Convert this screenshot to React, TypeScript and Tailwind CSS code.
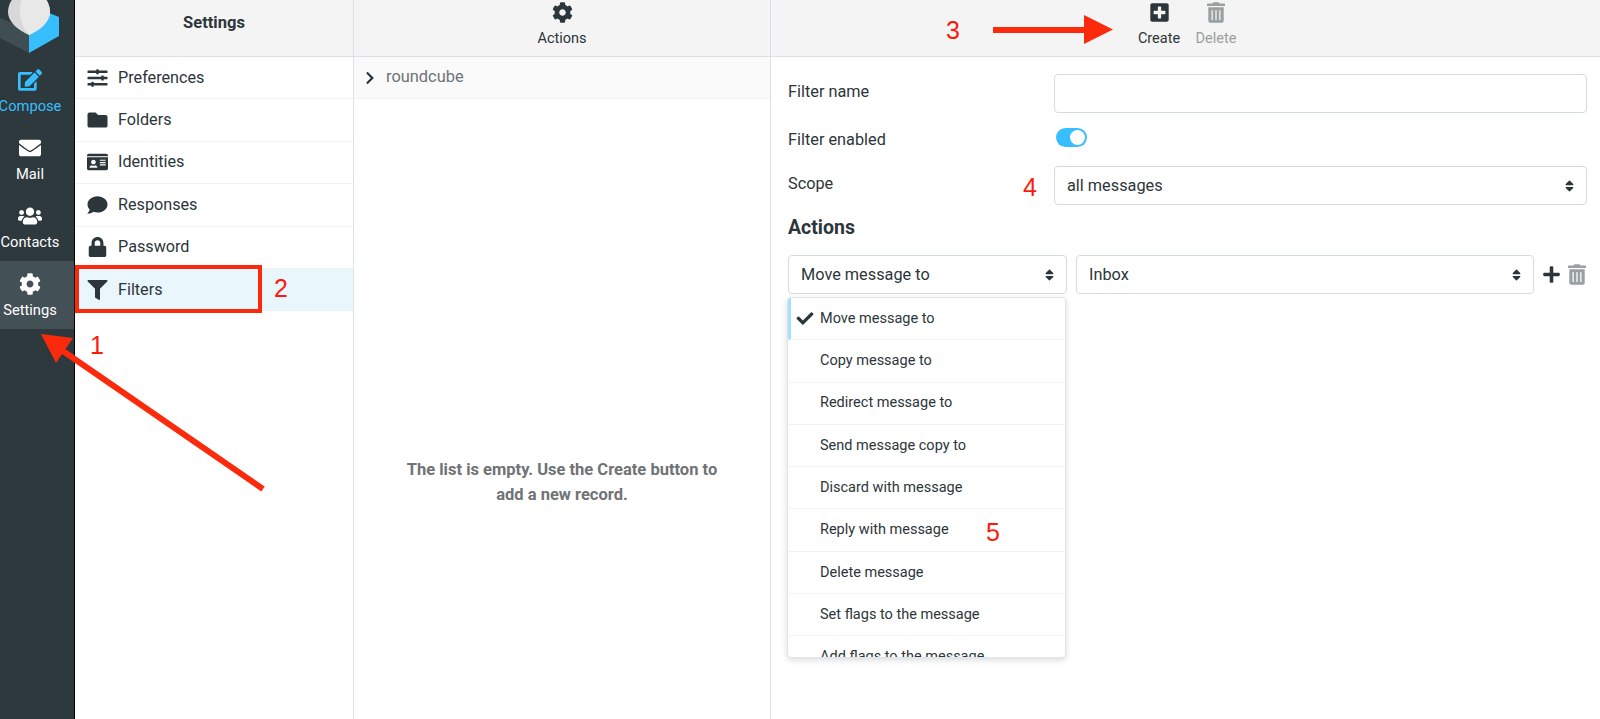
import { FaCheck, FaChevronRight, FaCog, FaComment, FaEdit, FaEnvelope, FaFilter, FaFolder, FaIdCard, FaLock, FaPlus, FaPlusSquare, FaSlidersH, FaSort, FaTrashAlt, FaUsers } from 'react-icons/fa'

const nav = [
  { name: 'Compose', icon: FaEdit, cls: 'text-[#37beff]' },
  { name: 'Mail', icon: FaEnvelope, cls: 'text-white' },
  { name: 'Contacts', icon: FaUsers, cls: 'text-white' },
  { name: 'Settings', icon: FaCog, cls: 'text-white bg-[#435056]' },
]

const sections = [
  { name: 'Preferences', icon: FaSlidersH },
  { name: 'Folders', icon: FaFolder },
  { name: 'Identities', icon: FaIdCard },
  { name: 'Responses', icon: FaComment },
  { name: 'Password', icon: FaLock },
  { name: 'Filters', icon: FaFilter },
]

const actions = [
  'Move message to',
  'Copy message to',
  'Redirect message to',
  'Send message copy to',
  'Discard with message',
  'Reply with message',
  'Delete message',
  'Set flags to the message',
  'Add flags to the message',
]

function Logo() {
  return (
    <svg width="60" height="56" viewBox="0 0 60 56" className="block">
      <polygon points="0,18 29,30 29,53 0,38" fill="#3f4e52" />
      <polygon points="29,53 59,36 59,17 49,13 29,30" fill="#37beff" />
      <path d="M8 12 A21 21 0 1 1 50 12 C50 22 40 30 29 35 C18 30 8 22 8 12 Z" fill="#d8d8d8" />
      <path d="M26 -9 A21 21 0 0 1 50 12 C50 22 40 30 29 35 C22 28 20 18 20 10 C20 2 22 -4 26 -9 Z" fill="#e8e8e8" />
    </svg>
  )
}

function SelectBox({ label, className }: { label: string; className: string }) {
  return (
    <div className={`flex h-[39px] items-center justify-between rounded-[4px] border border-[#d4dbde] bg-white pl-[12px] pr-[12px] text-[16.3px] text-[#2c363a] ${className}`}>
      <span className="pt-[1px]">{label}</span>
      <FaSort className="h-[14px] w-[9px] text-[#2c363a]" />
    </div>
  )
}

export default function App() {
  return (
    <div className="relative flex h-[719px] w-[1600px] overflow-hidden bg-white font-['Roboto',sans-serif] text-[#2c363a]">
      {/* Task menu */}
      <div className="flex w-[75px] flex-none flex-col border-r border-black bg-[#2e393d]">
        <div className="h-[57px] flex-none">
          <Logo />
        </div>
        {nav.map((item) => (
          <div key={item.name} className={`flex h-[68px] flex-none flex-col items-center pr-[14px] pt-[12px] text-[14.7px] leading-[20px] ${item.cls}`}>
            <item.icon className="h-[22px] w-[24px] flex-none" />
            <span className="mt-[5px] whitespace-nowrap">{item.name}</span>
          </div>
        ))}
      </div>

      {/* Settings sections */}
      <div className="flex w-[279px] flex-none flex-col border-r border-[#d9e1e5]">
        <div className="flex h-[57px] flex-none justify-center border-b border-[#d9e1e5] bg-[#f4f4f4] pt-[12px] text-[16.5px] font-bold leading-[22px]">
          Settings
        </div>
        {sections.map((item) => (
          <div
            key={item.name}
            className={`flex h-[42.4px] flex-none items-center border-b border-[#f1f3f4] pl-[6px] text-[16.2px] ${item.name === 'Filters' ? 'bg-[#e9f6fc]' : ''}`}
          >
            <span className="flex w-[32px] flex-none justify-center text-[#2c363a]">
              <item.icon className="h-[20px] w-[21px]" />
            </span>
            <span className="ml-[5px]">{item.name}</span>
          </div>
        ))}
      </div>

      {/* Filter sets */}
      <div className="flex w-[417px] flex-none flex-col border-r border-[#d9e1e5]">
        <div className="flex h-[57px] flex-none flex-col items-center border-b border-[#d9e1e5] bg-[#f4f4f4] pt-[2px] text-[14.5px] leading-[20px]">
          <FaCog className="h-[21px] w-[21px]" />
          <span className="mt-[6px]">Actions</span>
        </div>
        <div className="flex h-[42px] flex-none items-center border-b border-[#f1f3f4] bg-[#fafafa] pl-[10px] text-[16.4px] text-[#6f7376]">
          <FaChevronRight className="h-[14px] w-[12px] text-[#2c363a]" />
          <span className="ml-[10px]">roundcube</span>
        </div>
        <div className="flex flex-1 items-center justify-center pt-[146px] text-center text-[16.5px] font-bold leading-[25px] text-[#6f7376]">
          <p className="w-[340px]">The list is empty. Use the Create button to add a new record.</p>
        </div>
      </div>

      {/* Filter form */}
      <div className="flex min-w-0 flex-1 flex-col">
        <div className="flex h-[57px] flex-none justify-end gap-[15px] border-b border-[#d9e1e5] bg-[#f4f4f4] pr-[363px] pt-[2px] text-[14.5px] leading-[20px]">
          <div className="flex w-[42px] flex-col items-center">
            <FaPlusSquare className="h-[21px] w-[19px]" />
            <span className="mt-[6px]">Create</span>
          </div>
          <div className="flex w-[42px] flex-col items-center text-[#9a9fa1]">
            <FaTrashAlt className="h-[21px] w-[18px]" />
            <span className="mt-[6px]">Delete</span>
          </div>
        </div>
        <div className="flex flex-col pl-[17px] pr-[13px] pt-[17px] text-[16.3px]">
          <div className="flex items-center">
            <span className="w-[266px] flex-none pb-[3px]">Filter name</span>
            <div className="h-[39px] flex-1 rounded-[4px] border border-[#d4dbde] bg-white" />
          </div>
          <div className="mt-[14px] flex h-[20px] items-center">
            <span className="w-[266px] flex-none pt-[6px]">Filter enabled</span>
            <div className="ml-[2px] flex h-[19px] w-[31px] items-center justify-end rounded-full bg-[#37beff] pr-[2px]">
              <div className="h-[15px] w-[15px] rounded-full bg-white" />
            </div>
          </div>
          <div className="mt-[19px] flex items-center">
            <span className="w-[266px] flex-none pb-[2px]">Scope</span>
            <SelectBox label="all messages" className="flex-1" />
          </div>
          <h2 className="mt-[11px] text-[19.5px] font-bold leading-[24px]">Actions</h2>
          <div className="mt-[15px] flex items-center">
            <SelectBox label="Move message to" className="w-[279px] flex-none" />
            <SelectBox label="Inbox" className="ml-[9px] w-[458px] flex-none" />
            <FaPlus className="ml-[8px] h-[19px] w-[19px] flex-none" />
            <FaTrashAlt className="ml-[7px] h-[21px] w-[18px] flex-none text-[#9a9fa1]" />
          </div>
          <div className="mt-[3px] -ml-[1px] h-[361px] w-[279px] overflow-hidden rounded-[4px] border border-[#dfe5e8] bg-white shadow-[0_2px_6px_rgba(0,0,0,0.15)]">
            {actions.map((name, i) => (
              <div
                key={name}
                className={`relative flex h-[42.3px] items-center border-b border-[#f1f3f4] text-[14.5px] ${i === 0 ? 'border-l-[3px] border-l-[#a6e1fb] pl-[29px]' : 'pl-[32px]'}`}
              >
                {i === 0 && <FaCheck className="absolute left-[4px] h-[17px] w-[20px]" />}
                {name}
              </div>
            ))}
          </div>
        </div>
      </div>

      {/* Red annotations over the screenshot */}
      <div className="absolute left-[75px] top-[265px] h-[48px] w-[187px] border-[4px] border-[#fb2a0c]" />
      <svg width="1600" height="719" className="pointer-events-none absolute left-0 top-0">
        <line x1="263" y1="489" x2="60" y2="349" stroke="#fb2a0c" strokeWidth="6" />
        <polygon points="41,334 73,338 56,363" fill="#fb2a0c" />
        <rect x="993" y="27" width="92" height="6" fill="#fb2a0c" />
        <polygon points="1084,15 1113,29.5 1084,44" fill="#fb2a0c" />
      </svg>
      <span className="absolute left-[90px] top-[330px] font-['Liberation_Sans',sans-serif] text-[25px] leading-[30px] text-[#fb1a0c]">1</span>
      <span className="absolute left-[274px] top-[273px] font-['Liberation_Sans',sans-serif] text-[25px] leading-[30px] text-[#fb1a0c]">2</span>
      <span className="absolute left-[946px] top-[15px] font-['Liberation_Sans',sans-serif] text-[25px] leading-[30px] text-[#fb1a0c]">3</span>
      <span className="absolute left-[1023px] top-[172px] font-['Liberation_Sans',sans-serif] text-[25px] leading-[30px] text-[#fb1a0c]">4</span>
      <span className="absolute left-[986px] top-[517px] font-['Liberation_Sans',sans-serif] text-[25px] leading-[30px] text-[#fb1a0c]">5</span>
    </div>
  )
}
